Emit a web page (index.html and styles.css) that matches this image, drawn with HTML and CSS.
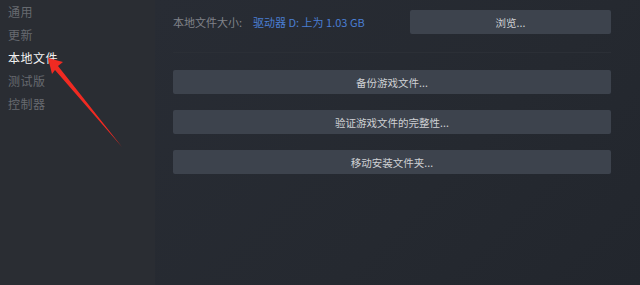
FILE: index.html
```html
<!DOCTYPE html>
<html lang="zh-CN">
<head>
<meta charset="utf-8">
<link rel="stylesheet" href="styles.css">
</head>
<body>
<div class="app">
  <nav class="sidebar">
    <div class="nav-item">通用</div>
    <div class="nav-item">更新</div>
    <div class="nav-item active">本地文件</div>
    <div class="nav-item">测试版</div>
    <div class="nav-item">控制器</div>
  </nav>
  <main class="content">
    <div class="size-row">
      <span class="label">本地文件大小:</span>
      <span class="value">驱动器 D: 上为 1.03 GB</span>
      <button class="btn browse">浏览...</button>
    </div>
    <div class="divider"></div>
    <div class="actions">
      <button class="btn wide">备份游戏文件...</button>
      <button class="btn wide">验证游戏文件的完整性...</button>
      <button class="btn wide">移动安装文件夹...</button>
    </div>
  </main>
</div>
<svg class="arrow" width="640" height="285" viewBox="0 0 640 285">
  <polygon points="48,58 63,62 58,66 122,147 55,70 52,74" fill="#f02a22"/>
</svg>
</body>
</html>
```
FILE: styles.css
```css
html, body {
  margin: 0;
  padding: 0;
  width: 640px;
  height: 285px;
  overflow: hidden;
  background: #252930;
  font-family: "Noto Sans CJK SC", "Noto Sans", sans-serif;
}
.app {
  display: flex;
  height: 285px;
}
.sidebar {
  width: 155px;
  flex: none;
  background: #2a2d33;
  padding-top: 0;
  box-sizing: border-box;
}
.nav-item {
  font-size: 12px;
  line-height: 23px;
  padding-left: 8px;
  color: #676a70;
  letter-spacing: 0.5px;
}
.nav-item.active {
  color: #f2f2f2;
}
.content {
  flex: 1;
  background: linear-gradient(135deg, #282c34 0%, #252930 60%, #22262d 100%);
  padding: 10px 29px 0 18px;
}
.size-row {
  display: flex;
  align-items: center;
  height: 24px;
  font-size: 11px;
}
.label {
  color: #80838a;
}
.value {
  color: #4a7ed2;
  margin-left: 11px;
}
.btn {
  border: none;
  border-radius: 2px;
  background: #3d434d;
  color: #cfd1d4;
  font-family: "Noto Sans CJK SC", "Noto Sans", sans-serif;
  font-size: 10.5px;
  height: 24px;
  padding: 0;
}
.browse {
  margin-left: auto;
  width: 201px;
}
.divider {
  height: 1px;
  background: #2b2f36;
  margin-top: 18px;
}
.actions {
  display: flex;
  flex-direction: column;
  gap: 16px;
  margin-top: 17px;
}
.wide {
  width: 100%;
}
.arrow {
  position: absolute;
  left: 0;
  top: 0;
  pointer-events: none;
}
```
